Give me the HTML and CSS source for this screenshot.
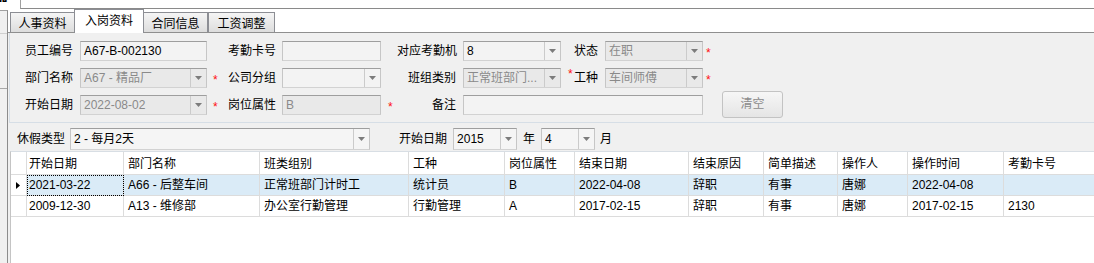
FILE: index.html
```html
<!DOCTYPE html>
<html lang="zh-CN">
<head>
    <meta charset="UTF-8">
    <meta name="viewport" content="width=device-width, initial-scale=1.0">
    <title>入岗资料</title>
    <link rel="stylesheet" href="styles.css">
</head>
<body>
    <div class="topbar">
        <span class="top-label">器</span>
        <div class="top-input"></div>
    </div>
    <div class="main">
        <div class="side">
            <div class="side-box"></div>
            <div class="side-box tall"></div>
        </div>
        <div class="content">
            <div class="tabs">
                <div class="tab">人事资料</div>
                <div class="tab active">入岗资料</div>
                <div class="tab">合同信息</div>
                <div class="tab last">工资调整</div>
            </div>
            <div class="panel">
                <!-- 基本信息 -->
                <div class="group">
                    <div class="lbl">员工编号</div>
                    <div class="field"><span class="val">A67-B-002130</span></div>
                    <div></div>
                    <div class="lbl narrow">考勤卡号</div>
                    <div class="field"><span class="val"></span></div>
                    <div></div>
                    <div class="lbl">对应考勤机</div>
                    <div class="field"><span class="val">8</span><span class="dd"><svg width="7" height="4" viewBox="0 0 7 4"><path d="M0 0H7L3.5 4Z"/></svg></span></div>
                    <div></div>
                    <div class="lbl left">状态</div>
                    <div class="field off"><span class="val">在职</span><span class="dd"><svg width="7" height="4" viewBox="0 0 7 4"><path d="M0 0H7L3.5 4Z"/></svg></span></div>
                    <div class="star s-end">*</div>
                    <div></div>

                    <div class="lbl">部门名称</div>
                    <div class="field off"><span class="val">A67 - 精品厂</span><span class="dd"><svg width="7" height="4" viewBox="0 0 7 4"><path d="M0 0H7L3.5 4Z"/></svg></span></div>
                    <div class="star">*</div>
                    <div class="lbl narrow">公司分组</div>
                    <div class="field"><span class="val"></span><span class="dd"><svg width="7" height="4" viewBox="0 0 7 4"><path d="M0 0H7L3.5 4Z"/></svg></span></div>
                    <div></div>
                    <div class="lbl">班组类别</div>
                    <div class="field off"><span class="val">正常班部门...</span><span class="dd"><svg width="7" height="4" viewBox="0 0 7 4"><path d="M0 0H7L3.5 4Z"/></svg></span></div>
                    <div class="star sup">*</div>
                    <div class="lbl left">工种</div>
                    <div class="field off"><span class="val">车间师傅</span><span class="dd"><svg width="7" height="4" viewBox="0 0 7 4"><path d="M0 0H7L3.5 4Z"/></svg></span></div>
                    <div class="star s-end">*</div>
                    <div></div>

                    <div class="lbl">开始日期</div>
                    <div class="field off"><span class="val">2022-08-02</span><span class="dd"><svg width="7" height="4" viewBox="0 0 7 4"><path d="M0 0H7L3.5 4Z"/></svg></span></div>
                    <div class="star">*</div>
                    <div class="lbl narrow">岗位属性</div>
                    <div class="field off"><span class="val">B</span></div>
                    <div class="star s-mid">*</div>
                    <div class="lbl">备注</div>
                    <div class="field wide"><span class="val"></span></div>
                    <button class="btn" disabled>清空</button>
                </div>

                <!-- 休假类型 -->
                <div class="filter">
                    <span class="f-lbl">休假类型</span>
                    <div class="field f-leave"><span class="val">2 - 每月2天</span><span class="dd"><svg width="7" height="4" viewBox="0 0 7 4"><path d="M0 0H7L3.5 4Z"/></svg></span></div>
                    <span class="f-lbl f-date">开始日期</span>
                    <div class="field f-year"><span class="val">2015</span><span class="dd"><svg width="7" height="4" viewBox="0 0 7 4"><path d="M0 0H7L3.5 4Z"/></svg></span></div>
                    <span class="f-lbl f-unit">年</span>
                    <div class="field f-month"><span class="val">4</span><span class="dd"><svg width="7" height="4" viewBox="0 0 7 4"><path d="M0 0H7L3.5 4Z"/></svg></span></div>
                    <span class="f-lbl f-unit">月</span>
                </div>

                <!-- 记录列表 -->
                <div class="grid">
                    <table>
                        <thead>
                            <tr>
                                <th class="rh"></th>
                                <th class="first" style="width: 97px">开始日期</th>
                                <th style="width: 136px">部门名称</th>
                                <th style="width: 149px">班类组别</th>
                                <th style="width: 96px">工种</th>
                                <th style="width: 70px">岗位属性</th>
                                <th style="width: 114px">结束日期</th>
                                <th style="width: 75px">结束原因</th>
                                <th style="width: 74px">简单描述</th>
                                <th style="width: 70px">操作人</th>
                                <th style="width: 96px">操作时间</th>
                                <th style="width: 120px">考勤卡号</th>
                            </tr>
                        </thead>
                        <tbody>
                            <tr class="current">
                                <td class="rh"><svg width="4" height="7" viewBox="0 0 4 7"><path d="M0 0L4 3.5L0 7Z"/></svg></td>
                                <td class="first focus">2021-03-22</td>
                                <td>A66 - 后整车间</td>
                                <td>正常班部门计时工</td>
                                <td>统计员</td>
                                <td>B</td>
                                <td>2022-04-08</td>
                                <td>辞职</td>
                                <td>有事</td>
                                <td>唐娜</td>
                                <td>2022-04-08</td>
                                <td></td>
                            </tr>
                            <tr>
                                <td class="rh"></td>
                                <td class="first">2009-12-30</td>
                                <td>A13 - 维修部</td>
                                <td>办公室行勤管理</td>
                                <td>行勤管理</td>
                                <td>A</td>
                                <td>2017-02-15</td>
                                <td>辞职</td>
                                <td>有事</td>
                                <td>唐娜</td>
                                <td>2017-02-15</td>
                                <td>2130</td>
                            </tr>
                        </tbody>
                    </table>
                </div>
            </div>
        </div>
    </div>
</body>
</html>
```

FILE: styles.css
```css
* {
    box-sizing: border-box;
}
body {
    margin: 0;
    width: 1094px;
    height: 263px;
    overflow: hidden;
    background: #fff;
    font-family: "Liberation Sans", "Noto Sans CJK SC", sans-serif;
    font-size: 12px;
    color: #000;
}
.topbar {
    display: flex;
    height: 9px;
    overflow: hidden;
}
.top-label {
    width: 24px;
    margin-left: -4px;
    margin-top: -9px;
    font-weight: bold;
    line-height: 12px;
}
.top-input {
    flex: 1;
    border-left: 1px solid #a0a0a0;
    border-bottom: 1px solid #8a8a8a;
}
.main {
    display: flex;
    height: 254px;
}
.side {
    width: 8px;
    margin-top: 1px;
    border-top: 1px solid #a0a0a0;
    border-right: 1px solid #8c8c8c;
    background: #f0f0f0;
}
.side-box {
    height: 23px;
    border-bottom: 1px solid #d0d0d0;
}
.side-box.tall {
    height: 55px;
    border-bottom: 1px solid #a8a8a8;
}
.content {
    flex: 1;
    min-width: 0;
    display: flex;
    flex-direction: column;
}

/* tabs */
.tabs {
    display: flex;
    align-items: flex-end;
    height: 24px;
    padding-left: 2px;
    margin-bottom: -1px;
}
.tab {
    width: 65px;
    height: 20px;
    margin-bottom: 1px;
    padding-top: 3px;
    border: 1px solid #8c8e94;
    border-bottom: none;
    background: linear-gradient(#f5f5f5, #dddddd);
    text-align: center;
    line-height: 16px;
}
.tab.active {
    position: relative;
    z-index: 1;
    width: 70px;
    height: 24px;
    margin: 0 -1px;
    background: #fff;
}
.tab.last {
    width: 67px;
}
.panel {
    flex: 1;
    min-height: 0;
    display: flex;
    flex-direction: column;
    padding-left: 1px;
    border-top: 1px solid #8f8f8f;
    background: #f0f0f0;
}

/* form */
.group {
    display: grid;
    grid-template-columns: 70px 127px 15px 60px 99px 16px 66px 98px 13px 31px 98px 19px 61px;
    grid-template-rows: repeat(3, 20px);
    row-gap: 7px;
    padding: 8px 0 7px;
    border-left: 1px solid #d6dee6;
    border-bottom: 1px solid #d6dee6;
    align-items: center;
}
.lbl {
    padding-right: 7px;
    text-align: right;
    white-space: nowrap;
    line-height: 20px;
}
.lbl.narrow {
    padding-right: 6px;
}
.lbl.left {
    padding-right: 0;
    text-align: left;
}
.field {
    display: flex;
    height: 20px;
    border: 1px solid;
    border-color: #9e9e9e #c6c6c6 #d2d2d2 #c6c6c6;
    background: #f3f3f3;
    line-height: 18px;
    overflow: hidden;
}
.field.off {
    background: #e9e9e9;
    color: #8a8a8a;
}
.field.wide {
    grid-column: 8 / 12;
}
.val {
    flex: 1;
    padding-left: 3px;
    white-space: nowrap;
    overflow: hidden;
}
.dd {
    width: 16px;
    display: flex;
    align-items: center;
    justify-content: center;
    border-left: 1px solid #cbcbcb;
}
.dd svg {
    fill: #7c7c7c;
}
.star {
    height: 20px;
    padding: 2px 0 0 6px;
    color: #ff1010;
    line-height: 20px;
}
.star.s-mid {
    padding-left: 7px;
}
.star.s-end {
    padding-left: 3px;
}
.star.sup {
    align-self: start;
    padding: 0 0 0 7px;
    line-height: 12px;
}
.btn {
    grid-column: 13;
    grid-row: 3;
    align-self: start;
    height: 27px;
    margin-top: -4px;
    padding: 0;
    border: 1px solid #c3c3c3;
    border-radius: 3px;
    background: linear-gradient(#f6f6f6, #e5e5e5);
    color: #8b8b8b;
    font-family: inherit;
    font-size: 12px;
    line-height: 25px;
}

/* 休假类型 */
.filter {
    display: flex;
    align-items: center;
    height: 28px;
    padding: 5px 0 1px 8px;
}
.filter .field {
    height: 22px;
    line-height: 20px;
    background: #f5f5f5;
}
.f-lbl {
    white-space: nowrap;
    line-height: 22px;
}
.f-leave {
    width: 300px;
    margin-left: 5px;
}
.f-date {
    margin: 0 6px 0 29px;
}
.f-year {
    width: 64px;
}
.f-month {
    width: 54px;
}
.f-unit {
    margin: 0 6px;
}
.f-unit:last-child {
    margin-left: 5px;
}

/* grid */
.grid {
    flex: 1;
    margin-left: 1px;
    border-left: 1px solid #c4c4c4;
    border-top: 1px solid #d8dee4;
    background: #fff;
    overflow: hidden;
}
table {
    border-collapse: separate;
    border-spacing: 0;
    table-layout: fixed;
    width: 1113px;
}
th, td {
    padding: 0 0 0 4px;
    border-right: 1px solid #dcdcdc;
    border-bottom: 1px solid #dcdcdc;
    text-align: left;
    font-weight: normal;
    white-space: nowrap;
    overflow: hidden;
}
th {
    height: 23px;
    padding-top: 3px;
    line-height: 19px;
}
td {
    height: 21px;
    line-height: 20px;
}
.rh {
    width: 16px;
    padding: 0 0 0 5px;
}
th.first, td.first {
    padding-left: 2px;
}
.rh svg {
    display: block;
    fill: #000;
}
tr.current td {
    background: #daebf7;
}
tr.current td.rh {
    background: #fff;
}
td.focus {
    outline: 1px dotted #000;
    outline-offset: -1px;
}
```
